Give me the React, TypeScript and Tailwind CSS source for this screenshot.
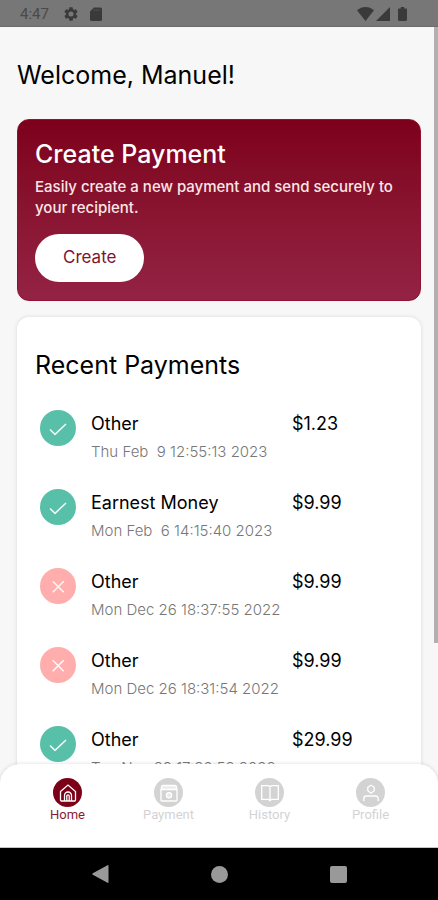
import React from "react";

interface Payment {
  name: string;
  date: string;
  amount: string;
  ok: boolean;
}

const payments: Payment[] = [
  { name: "Other", date: "Thu Feb  9 12:55:13 2023", amount: "$1.23", ok: true },
  { name: "Earnest Money", date: "Mon Feb  6 14:15:40 2023", amount: "$9.99", ok: true },
  { name: "Other", date: "Mon Dec 26 18:37:55 2022", amount: "$9.99", ok: false },
  { name: "Other", date: "Mon Dec 26 18:31:54 2022", amount: "$9.99", ok: false },
  { name: "Other", date: "Tue Nov 29 17:36:52 2022", amount: "$29.99", ok: true },
];

const StatusBar: React.FC = () => (
  <header className="flex h-[27px] shrink-0 items-center justify-between border-b border-[#6b6b6b] bg-[#777777] pt-px pr-[31px] pl-5 text-[#3a3a3a]">
    <div className="flex items-center">
      <span className="w-11 font-[Roboto,sans-serif] text-[15px] leading-5 text-[#4a4a4a]">4:47</span>
      <svg width="14" height="14" viewBox="2 2 20 20" fill="currentColor">
        <path d="M19.14 12.94c.04-.3.06-.61.06-.94 0-.32-.02-.64-.07-.94l2.03-1.58a.49.49 0 0 0 .12-.61l-1.92-3.32a.49.49 0 0 0-.59-.22l-2.39.96c-.5-.38-1.03-.7-1.62-.94l-.36-2.54a.48.48 0 0 0-.48-.41h-3.84c-.24 0-.43.17-.47.41l-.36 2.54c-.59.24-1.13.57-1.62.94l-2.39-.96a.48.48 0 0 0-.59.22L2.74 8.87c-.12.21-.08.47.12.61l2.03 1.58c-.05.3-.09.63-.09.94s.02.64.07.94l-2.03 1.58a.49.49 0 0 0-.12.61l1.92 3.32c.12.22.37.29.59.22l2.39-.96c.5.38 1.03.7 1.62.94l.36 2.54c.05.24.24.41.48.41h3.84c.24 0 .44-.17.47-.41l.36-2.54c.59-.24 1.13-.56 1.62-.94l2.39.96c.22.08.47 0 .59-.22l1.92-3.32c.12-.22.07-.47-.12-.61l-2.01-1.58zM12 15.6A3.6 3.6 0 1 1 12 8.4a3.6 3.6 0 0 1 0 7.2z" />
      </svg>
      <svg className="ml-3" width="12" height="14" viewBox="0 0 12 14" fill="currentColor">
        <path d="M4 .5h6.500A1.500 1.500 0 0 1 12 2v10.500a1.500 1.500 0 0 1-1.500 1.500h-9A1.500 1.500 0 0 1 0 12.500V4.500z" />
        <path d="M4.500 2.500v1.500M6.700 2.500v1.500M8.900 2.500v1.500" stroke="#606060" strokeWidth="0.800" />
      </svg>
    </div>
    <div className="flex items-center">
      <svg width="17" height="14" viewBox="0 0 17 14" fill="currentColor">
        <path d="M8.500 14 0 3.300C2.400 1.200 5.300 0 8.500 0s6.100 1.200 8.500 3.300z" />
      </svg>
      <svg className="ml-0.5" width="14" height="14" viewBox="0 0 14 14" fill="currentColor">
        <path d="M14 0v14H0z" />
      </svg>
      <svg className="ml-2" width="9" height="14" viewBox="0 0 9 14" fill="currentColor">
        <path d="M2.800 0h3.400v1.400h1.600c.7 0 1.200.5 1.200 1.200v10.200c0 .7-.5 1.200-1.200 1.200H1.200C.5 14 0 13.500 0 12.800V2.600c0-.7.5-1.200 1.200-1.200h1.600z" />
      </svg>
    </div>
  </header>
);

const StatusIcon: React.FC<{ ok: boolean }> = ({ ok }) => (
  <span
    className={`flex size-9 shrink-0 items-center justify-center rounded-full ${
      ok ? "bg-[#58bfa9]" : "bg-[#ffadad]"
    }`}
  >
    <svg width="18" height="18" viewBox="0 0 18 18" fill="none" stroke="white" strokeWidth="1.600" opacity="0.900">
      {ok ? <path d="M1 10.500 6 15.300 17 5" /> : <path d="M3.700 4.300 14.700 15.300M14.700 4.300 3.700 15.300" />}
    </svg>
  </span>
);

const PaymentRow: React.FC<{ payment: Payment }> = ({ payment }) => (
  <li className="flex h-[79px] pl-[5px]">
    <StatusIcon ok={payment.ok} />
    <div className="ml-[15px] w-[201px] whitespace-nowrap">
      <p className="text-lg leading-7 text-black">{payment.name}</p>
      <p className="text-[15px] leading-7 font-light whitespace-pre text-[#777777]">{payment.date}</p>
    </div>
    <p className="text-lg leading-7 text-black">{payment.amount}</p>
  </li>
);

const navItems = [
  {
    label: "Home",
    icon: (
      <>
        <path d="M1.500 7.500 9 1l7.500 6.500V16a1 1 0 0 1-1 1h-13a1 1 0 0 1-1-1z" />
        <path d="M5.500 17v-5.500a3.500 3.500 0 0 1 7 0V17M7.800 17v-5a1.200 1.200 0 0 1 2.400 0v5" />
      </>
    ),
  },
  {
    label: "Payment",
    icon: (
      <>
        <path d="M1.500 6V3a1.500 1.500 0 0 1 1.500-1.500h12A1.500 1.500 0 0 1 16.500 3v3" fill="white" fillOpacity="0.600" />
        <path d="M1 5.500h16V16a1 1 0 0 1-1 1H2a1 1 0 0 1-1-1z" />
        <circle cx="9" cy="11.200" r="2.600" fill="white" fillOpacity="0.500" />
      </>
    ),
  },
  {
    label: "History",
    icon: <path d="M9 2.500v15M0.700 1.700H7.500L9 2.700l1.500-1h6.800v13.600h-6.800L9 16.800l-1.500-1.500H0.700z" />,
  },
  {
    label: "Profile",
    icon: (
      <>
        <path d="M9 1.200 12.200 3.200v3.600L9 9.200 5.800 6.800V3.200z" strokeLinejoin="round" />
        <path d="M1.800 17.200v-2.700a2.500 2.500 0 0 1 2.500-2.500h9.400a2.500 2.500 0 0 1 2.500 2.500v2.700" />
      </>
    ),
  },
];

const BottomNav: React.FC = () => (
  <nav className="relative grid h-[84px] shrink-0 grid-cols-4 items-start rounded-t-[20px] border-b border-[#c4c4c4] bg-white px-[17px] pt-[14px] shadow-[0_0_4px_rgba(0,0,0,0.14)]">
    {navItems.map((item, i) => (
      <button
        key={item.label}
        className={`flex flex-col items-center font-[Roboto,sans-serif] text-[13px] leading-4 ${
          i === 0 ? "text-[#8a1a35]" : "text-[#d3d3d3]"
        }`}
      >
        <span
          className={`flex size-[29px] items-center justify-center rounded-full ${
            i === 0 ? "bg-[#7d0019]" : "bg-[#d3d3d3]"
          }`}
        >
          <svg width="18" height="18" viewBox="0 0 18 18" fill="none" stroke="white" strokeWidth="1.300">
            {item.icon}
          </svg>
        </span>
        {item.label}
      </button>
    ))}
  </nav>
);

const SystemBar: React.FC = () => (
  <footer className="flex h-[52px] shrink-0 items-center justify-center gap-[102px] bg-black text-[#999999]">
    <button aria-label="Back">
      <svg width="17" height="18" viewBox="0 0 17 18" fill="currentColor">
        <path d="M16.500 0.500v17a.8.8 0 0 1-1 .300L.8 9.700a.8.8 0 0 1 0-1.400L15.500 .2a.8.8 0 0 1 1 .300z" />
      </svg>
    </button>
    <button aria-label="Home" className="size-[17px] rounded-full bg-current" />
    <button aria-label="Overview" className="size-[17px] rounded-xs bg-current" />
  </footer>
);

export default function App() {
  return (
    <div className="flex h-screen flex-col overflow-hidden bg-[#f7f7f7] font-[Inter,sans-serif]">
      <StatusBar />
      <main className="relative -mb-5 min-h-0 flex-1 overflow-hidden px-[17px]">
        <h1 className="pt-8 pb-7 text-[25px] leading-8 text-black">Welcome, Manuel!</h1>
        <section className="rounded-xl border border-[#8f1230] bg-linear-to-b from-[#7d001b] to-[#942244] px-[17px] pt-[18px] pb-[18px]">
          <h2 className="text-[25px] leading-8 font-medium text-white">Create Payment</h2>
          <p className="mt-1.5 text-[15px] leading-[21px] font-medium text-[#fbe6e6]">
            Easily create a new payment and send securely to your recipient.
          </p>
          <button className="mt-4 h-12 rounded-full bg-white px-7 text-[17px] text-[#7d1530]">Create</button>
        </section>
        <section className="mt-4 rounded-xl bg-white px-[18px] pt-8 shadow-[0_0_4px_rgba(0,0,0,0.12)]">
          <h2 className="text-[25px] leading-8 text-black">Recent Payments</h2>
          <ul className="mt-[29px]">
            {payments.map((payment) => (
              <PaymentRow key={payment.date} payment={payment} />
            ))}
          </ul>
        </section>
        <div className="absolute top-0 right-0 h-[616px] w-1 bg-[#b0b0b0]" />
      </main>
      <BottomNav />
      <SystemBar />
    </div>
  );
}
